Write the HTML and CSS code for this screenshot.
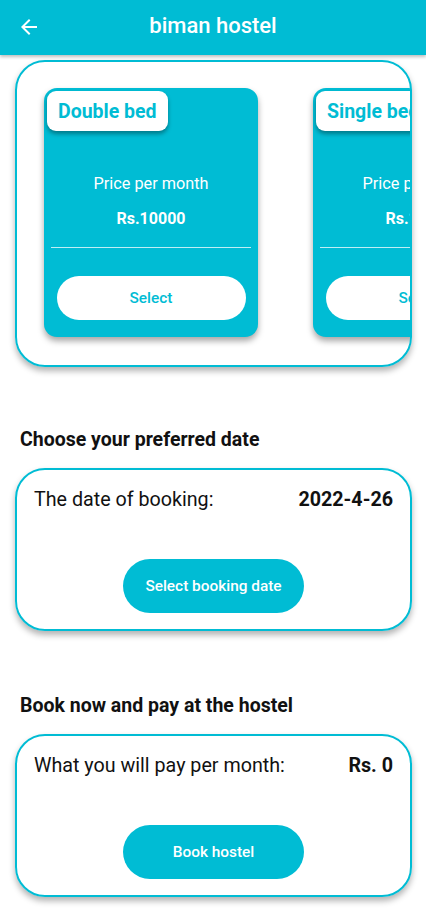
FILE: index.html
```html
<!DOCTYPE html>
<html>
<head>
<meta charset="utf-8">
<link rel="stylesheet" href="styles.css">
</head>
<body>
<header class="appbar">
  <svg class="back" width="24" height="24" viewBox="0 0 24 24"><path d="M20 11H7.83l5.59-5.59L12 4l-8 8 8 8 1.41-1.41L7.83 13H20v-2z" fill="#fff"/></svg>
  <h1 class="title">biman hostel</h1>
</header>
<main class="content">
  <section class="carousel">
    <div class="track">
      <div class="room">
        <div class="room-label">Double bed</div>
        <div class="room-price-label">Price per month</div>
        <div class="room-price">Rs.10000</div>
        <div class="room-divider"></div>
        <button class="room-select">Select</button>
      </div>
      <div class="room">
        <div class="room-label">Single bed</div>
        <div class="room-price-label">Price per month</div>
        <div class="room-price">Rs.10000</div>
        <div class="room-divider"></div>
        <button class="room-select">Select</button>
      </div>
    </div>
  </section>

  <h2 class="section-title first">Choose your preferred date</h2>
  <section class="panel">
    <div class="panel-row">
      <span class="panel-label">The date of booking:</span>
      <span class="panel-value">2022-4-26</span>
    </div>
    <button class="pill">Select booking date</button>
  </section>

  <h2 class="section-title">Book now and pay at the hostel</h2>
  <section class="panel">
    <div class="panel-row">
      <span class="panel-label">What you will pay per month:</span>
      <span class="panel-value">Rs. 0</span>
    </div>
    <button class="pill">Book hostel</button>
  </section>
</main>
</body>
</html>
```

FILE: styles.css
```css
* { box-sizing: border-box; }
html, body { margin: 0; padding: 0; background: #fff; }
body {
  font-family: Roboto, "Liberation Sans", sans-serif;
  width: 426px;
  height: 910px;
  overflow: hidden;
}
.appbar {
  height: 55px;
  background: #00BCD4;
  display: flex;
  align-items: center;
  position: relative;
  box-shadow: 0 2px 3px rgba(0,0,0,0.25);
  z-index: 2;
}
.back {
  margin-left: 17px;
  margin-top: -2px;
}
.title {
  position: absolute;
  left: 0; right: 0;
  top: 12px;
  margin: 0;
  text-align: center;
  color: #fff;
  font-size: 22px;
  font-weight: 500;
  line-height: 28px;
}
.content {
  padding: 5px 14px 0 15px;
}
.carousel {
  border: 2px solid #00BCD4;
  border-radius: 30px;
  height: 307px;
  overflow: hidden;
  box-shadow: 0 4px 6px rgba(0,0,0,0.3);
  padding: 26px 0 0 27px;
}
.track {
  display: flex;
  gap: 55px;
}
.room {
  flex: 0 0 214px;
  height: 249px;
  background: #00BCD4;
  border-radius: 13px;
  box-shadow: 0 4px 6px rgba(0,0,0,0.35);
  display: flex;
  flex-direction: column;
  align-items: center;
  position: relative;
}
.room-label {
  align-self: flex-start;
  margin: 3px 0 0 3px;
  height: 40px;
  padding: 1px 11px 0;
  background: #fff;
  border-radius: 9px;
  box-shadow: 0 3px 4px rgba(0,0,0,0.35);
  color: #00BCD4;
  font-weight: 700;
  font-size: 19.5px;
  line-height: 39px;
  white-space: nowrap;
}
.room-price-label {
  margin-top: 42px;
  color: #fff;
  font-size: 16.3px;
  line-height: 22px;
}
.room-price {
  margin-top: 13px;
  color: #fff;
  font-size: 16px;
  font-weight: 700;
  line-height: 22px;
}
.room-divider {
  margin-top: 17px;
  width: 200px;
  height: 1px;
  background: rgba(255,255,255,0.75);
}
.room-select {
  margin-top: 28px;
  width: 189px;
  height: 44px;
  border: none;
  border-radius: 22px;
  background: #fff;
  color: #00BCD4;
  font-family: inherit;
  font-size: 15.4px;
  font-weight: 500;
}
.section-title {
  margin: 64px 0 17px 5px;
  font-size: 19.5px;
  font-weight: 700;
  line-height: 22px;
  color: #111;
}
.section-title.first {
  margin-top: 62px;
}
.panel {
  height: 163px;
  border: 2px solid #00BCD4;
  border-radius: 30px;
  box-shadow: 0 4px 6px rgba(0,0,0,0.3);
  padding: 18px 17px 0 17px;
  display: flex;
  flex-direction: column;
  align-items: center;
}
.panel-row {
  align-self: stretch;
  display: flex;
  justify-content: space-between;
  align-items: center;
  height: 22px;
  color: #111;
  font-size: 19.7px;
}
.panel-value {
  font-weight: 700;
}
.pill {
  margin-top: 49px;
  width: 181px;
  height: 54px;
  border: none;
  border-radius: 27px;
  background: #00BCD4;
  color: #fff;
  font-family: inherit;
  font-size: 15.4px;
  font-weight: 500;
}
```
